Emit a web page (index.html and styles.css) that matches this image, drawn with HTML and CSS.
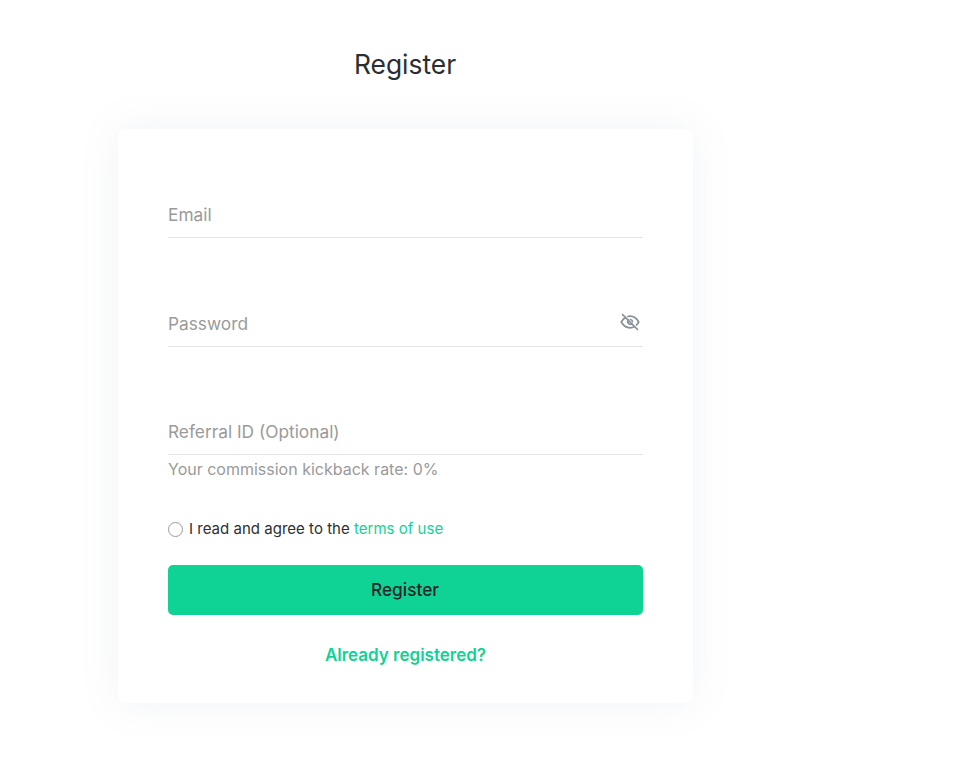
FILE: index.html
```html
<!DOCTYPE html>
<html lang="en">
<head>
    <meta charset="UTF-8">
    <meta name="viewport" content="width=device-width, initial-scale=1.0">
    <title>Register</title>
    <link rel="stylesheet" href="styles.css">
</head>
<body>
    <div class="page">
        <h1>Register</h1>
        <form class="card">
            <div class="field">
                <input type="text" placeholder="Email">
            </div>
            <div class="field field-password">
                <input type="password" placeholder="Password">
                <svg class="eye" viewBox="0 0 24 24" width="20" height="20" fill="none" stroke="#868e96" stroke-width="2" stroke-linecap="round" stroke-linejoin="round">
                    <path d="M3 3l18 18"/>
                    <path d="M6.500 6.600C4.500 7.800 2.900 9.600 1.500 12c2.800 4.800 6.300 7 10.500 7 1.900 0 3.600-.4 5.200-1.400"/>
                    <path d="M9.500 5.400c.8-.3 1.600-.4 2.500-.4 4.200 0 7.700 2.200 10.500 7-.8 1.400-1.700 2.600-2.700 3.600"/>
                    <path d="M9.900 9.900a3 3 0 0 0 4.200 4.200"/>
                    <path d="M12.500 9a3 3 0 0 1 2.500 2.500"/>
                </svg>
            </div>
            <div class="field field-last">
                <input type="text" placeholder="Referral ID (Optional)">
            </div>
            <p class="hint">Your commission kickback rate: 0%</p>
            <label class="terms">
                <span class="radio"></span>
                <span>I read and agree to the <a href="#">terms of use</a></span>
            </label>
            <button type="button" class="register-btn">Register</button>
            <a href="#" class="login-link">Already registered?</a>
        </form>
    </div>
</body>
</html>
```

FILE: styles.css
```css
* {
    box-sizing: border-box;
}

html, body {
    min-height: 100%;
}

body {
    margin: 0;
    background: #fff;
    font-family: Inter, "Liberation Sans", sans-serif;
    color: #212529;
}

.page {
    width: 575px;
    margin-left: 118px;
    padding-top: 46.5px;
    padding-bottom: 77px;
}

h1 {
    margin: 0 0 47.5px;
    padding-right: 1px;
    font-size: 26.4px;
    line-height: 35px;
    font-weight: 400;
    color: #2b2f33;
    text-align: center;
}

.card {
    display: flex;
    flex-direction: column;
    height: 574px;
    padding: 0 50px;
    background: #fff;
    border-radius: 8px;
    box-shadow: 0 0 40px rgba(120, 140, 170, 0.1);
}

.field {
    position: relative;
    margin-top: 62px;
    border-bottom: 1px solid #e1e3e6;
}

.field-last {
    margin-top: 61px;
}

.field input {
    display: block;
    width: 100%;
    height: 46px;
    padding: 1px 0 0;
    border: none;
    outline: none;
    background: transparent;
    font-family: inherit;
    font-size: 17.3px;
    color: #212529;
}

.field-password input {
    padding: 0;
}

.field input::placeholder {
    color: #9a9a9a;
    opacity: 1;
}

.eye {
    position: absolute;
    right: 3px;
    top: 12px;
}

.hint {
    margin: 4px 0 0;
    font-size: 16px;
    line-height: 20px;
    color: #9a9a9a;
}

.terms {
    display: flex;
    align-items: center;
    gap: 6px;
    margin-top: 40px;
    font-size: 15px;
    line-height: 20px;
    letter-spacing: 0.02px;
    color: #2b2f33;
}

.radio {
    width: 15px;
    height: 15px;
    border: 1px solid #9a9a9a;
    border-radius: 50%;
}

.terms a {
    color: #0fd394;
    text-decoration: none;
}

.register-btn {
    height: 50px;
    margin-top: 26px;
    padding: 0 1px 1px 0;
    border: none;
    border-radius: 5px;
    background: #0fd394;
    font-family: inherit;
    font-size: 17.3px;
    font-weight: 500;
    color: #212529;
    cursor: pointer;
}

.login-link {
    margin-top: 29px;
    font-size: 17px;
    line-height: 22px;
    font-weight: 600;
    text-align: center;
    color: #0fd394;
    text-decoration: none;
}
```
